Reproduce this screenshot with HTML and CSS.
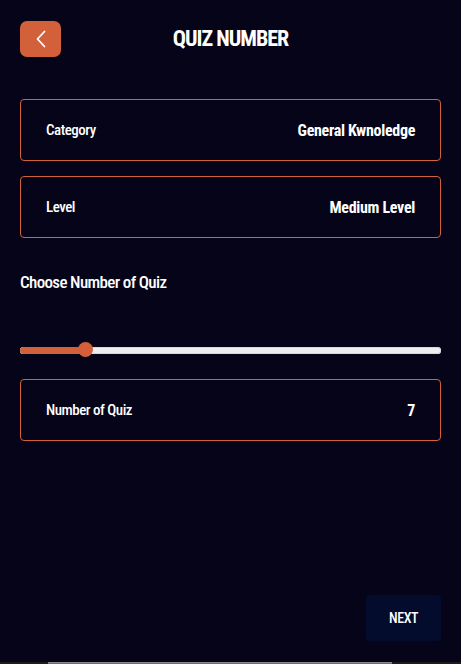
FILE: index.html
```html
<!DOCTYPE html>
<html lang="en">
<head>
<meta charset="utf-8">
<title>Quiz Number</title>
<link rel="stylesheet" href="styles.css">
</head>
<body>
<div class="app">
  <header class="header">
    <button class="back" aria-label="Back">
      <svg width="12" height="18" viewBox="0 0 12 18"><path d="M9.5 1.5 L2.5 9 L9.5 16.5" fill="none" stroke="#fff" stroke-width="1.8" stroke-linecap="round" stroke-linejoin="round"/></svg>
    </button>
    <h1 class="title">QUIZ NUMBER</h1>
    <span></span>
  </header>

  <div class="cards">
    <div class="card"><span class="label">Category</span><span class="value">General Kwnoledge</span></div>
    <div class="card"><span class="label">Level</span><span class="value">Medium Level</span></div>
  </div>

  <h2 class="heading">Choose Number of Quiz</h2>

  <div class="slider">
    <div class="track"><div class="fill"></div></div>
    <div class="thumb"></div>
  </div>

  <div class="card card-count"><span class="label">Number of Quiz</span><span class="value">7</span></div>

  <div class="footer">
    <button class="next">NEXT</button>
  </div>
</div>
<div class="scrollbar"><div class="scroll-thumb"></div></div>
</body>
</html>
```

FILE: styles.css
```css
* { box-sizing: border-box; }
html, body { margin: 0; padding: 0; }
body {
  width: 461px;
  height: 664px;
  background: #050418;
  color: #fff;
  font-family: "Roboto", "Open Sans", sans-serif;
  font-stretch: 75%;
  overflow: hidden;
}
.app {
  height: 662px;
  padding: 21px 20px 0 20px;
  display: flex;
  flex-direction: column;
}
.header {
  display: grid;
  grid-template-columns: 41px 1fr 41px;
  align-items: center;
  height: 36px;
}
.back {
  width: 41px;
  height: 36px;
  border: none;
  border-radius: 7px;
  background: #d2603a;
  display: flex;
  align-items: center;
  justify-content: center;
  padding: 0;
}
.title {
  margin: 0;
  text-align: center;
  font-size: 22px;
  font-weight: 700;
  letter-spacing: -1px;
  line-height: 36px;
}
.cards {
  margin-top: 42px;
  display: flex;
  flex-direction: column;
  gap: 15px;
}
.card {
  height: 62px;
  border: 1px solid #d2603a;
  border-radius: 4px;
  display: flex;
  align-items: center;
  justify-content: space-between;
  padding: 0 25px 0 25px;
}
.label {
  font-size: 15px;
  font-weight: 500;
  letter-spacing: -0.5px;
}
.value {
  font-size: 16px;
  font-weight: 700;
  letter-spacing: -0.3px;
}
.heading {
  margin: 33px 0 0 0;
  font-size: 17px;
  font-weight: 500;
  letter-spacing: -0.65px;
  line-height: 22px;
}
.slider {
  position: relative;
  margin-top: 49px;
  height: 16px;
  display: flex;
  align-items: center;
}
.track {
  width: 100%;
  height: 7px;
  border-radius: 4px;
  background: #eeeeee;
  box-shadow: inset 0 0 0 1px #d8d8d8;
  overflow: hidden;
}
.fill {
  width: 64px;
  height: 100%;
  background: #d2603a;
}
.thumb {
  position: absolute;
  left: 58px;
  top: 0;
  width: 15px;
  height: 15px;
  border-radius: 50%;
  background: #d2603a;
}
.card-count {
  margin-top: 21px;
}
.footer {
  margin-top: auto;
  margin-bottom: 21px;
  display: flex;
  justify-content: flex-end;
}
.next {
  width: 75px;
  height: 46px;
  border: none;
  border-radius: 4px;
  background: #040c2e;
  color: #fff;
  font-family: inherit;
  font-stretch: 75%;
  font-size: 14px;
  font-weight: 500;
  letter-spacing: -0.5px;
  padding: 0;
}
.scrollbar {
  height: 2px;
  background: #1c1c18;
  display: flex;
}
.scroll-thumb {
  margin-left: 48px;
  width: 344px;
  background: #6b6b6b;
  border-top: 1px solid #8a8a8a;
}
```
